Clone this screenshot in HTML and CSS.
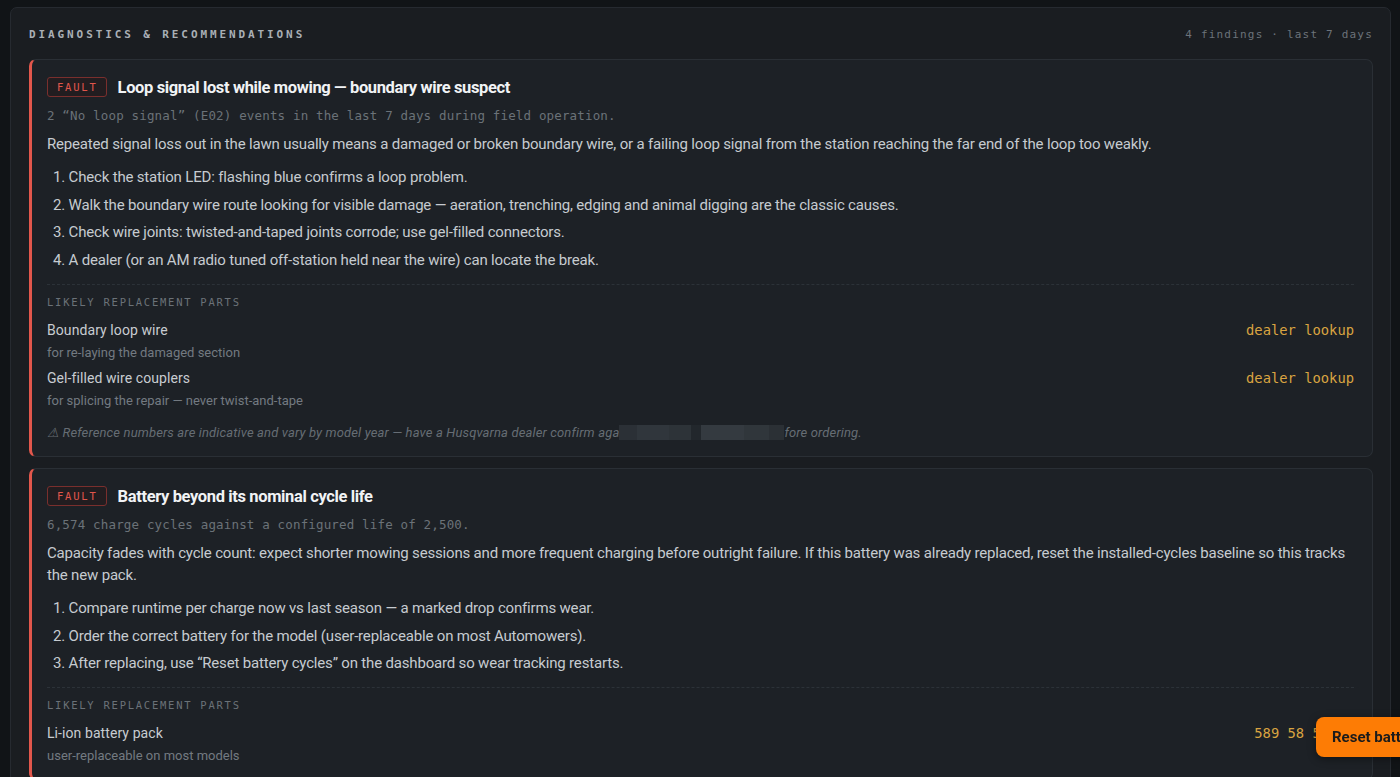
FILE: index.html
```html
<!DOCTYPE html>
<html lang="en">
<head>
<meta charset="utf-8">
<title>Diagnostics &amp; Recommendations</title>
<link rel="stylesheet" href="styles.css">
</head>
<body>
<section class="panel">
  <header class="panel-head">
    <h2 class="panel-title">DIAGNOSTICS &amp; RECOMMENDATIONS</h2>
    <span class="panel-meta">4 findings · last 7 days</span>
  </header>

  <article class="card">
    <div class="card-head">
      <span class="badge">FAULT</span>
      <h3 class="card-title">Loop signal lost while mowing — boundary wire suspect</h3>
    </div>
    <p class="evidence">2 “No loop signal” (E02) events in the last 7 days during field operation.</p>
    <p class="explain">Repeated signal loss out in the lawn usually means a damaged or broken boundary wire, or a failing loop signal from the station reaching the far end of the loop too weakly.</p>
    <ol class="steps">
      <li>Check the station LED: flashing blue confirms a loop problem.</li>
      <li>Walk the boundary wire route looking for visible damage — aeration, trenching, edging and animal digging are the classic causes.</li>
      <li>Check wire joints: twisted-and-taped joints corrode; use gel-filled connectors.</li>
      <li>A dealer (or an AM radio tuned off-station held near the wire) can locate the break.</li>
    </ol>
    <div class="parts">
      <div class="parts-label">LIKELY REPLACEMENT PARTS</div>
      <div class="part">
        <div class="part-info">
          <div class="part-name">Boundary loop wire</div>
          <div class="part-note">for re-laying the damaged section</div>
        </div>
        <div class="part-ref">dealer lookup</div>
      </div>
      <div class="part">
        <div class="part-info">
          <div class="part-name">Gel-filled wire couplers</div>
          <div class="part-note">for splicing the repair — never twist-and-tape</div>
        </div>
        <div class="part-ref">dealer lookup</div>
      </div>
      <p class="disclaimer">⚠ Reference numbers are indicative and vary by model year — have a Husqvarna dealer confirm aga<span class="redact">inst the part number be</span>fore ordering.</p>
    </div>
  </article>

  <article class="card">
    <div class="card-head">
      <span class="badge">FAULT</span>
      <h3 class="card-title">Battery beyond its nominal cycle life</h3>
    </div>
    <p class="evidence">6,574 charge cycles against a configured life of 2,500.</p>
    <p class="explain">Capacity fades with cycle count: expect shorter mowing sessions and more frequent charging before outright failure. If this battery was already replaced, reset the installed-cycles baseline so this tracks the new pack.</p>
    <ol class="steps">
      <li>Compare runtime per charge now vs last season — a marked drop confirms wear.</li>
      <li>Order the correct battery for the model (user-replaceable on most Automowers).</li>
      <li>After replacing, use “Reset battery cycles” on the dashboard so wear tracking restarts.</li>
    </ol>
    <div class="parts">
      <div class="parts-label">LIKELY REPLACEMENT PARTS</div>
      <div class="part">
        <div class="part-info">
          <div class="part-name">Li-ion battery pack</div>
          <div class="part-note">user-replaceable on most models</div>
        </div>
        <div class="part-ref">589 58 52-01</div>
      </div>
    </div>
  </article>
</section>

<button class="reset-btn" type="button">Reset battery cycles</button>
</body>
</html>
```

FILE: styles.css
```css
html, body {
  margin: 0;
  padding: 0;
  background: #111417;
  height: 100%;
  overflow: hidden;
}

body {
  font-family: Roboto, "Noto Sans", sans-serif;
  color: #c6cbd0;
}

.panel {
  margin: 7px 9px 0 10px;
  padding: 18px 17px 20px 18px;
  background: #1a1d21;
  border: 1px solid #262a30;
  border-radius: 7px;
}

.panel-head {
  display: flex;
  justify-content: space-between;
  align-items: center;
  height: 16px;
  margin-bottom: 17px;
}

.panel-title {
  margin: 0;
  font-family: "DejaVu Sans Mono", monospace;
  font-size: 11px;
  font-weight: bold;
  letter-spacing: 2.9px;
  color: #a9afb5;
}

.panel-meta {
  font-family: "DejaVu Sans Mono", monospace;
  font-size: 11px;
  letter-spacing: 1.2px;
  color: #6c737a;
}

.card {
  background: #1d2126;
  border: 1px solid #2a2f35;
  border-left: 3px solid #e2574c;
  border-radius: 7px;
  padding: 17px 18px 14px 15px;
  margin-bottom: 11px;
}

.card-head {
  display: flex;
  align-items: center;
  gap: 11px;
  height: 20px;
}

.badge {
  box-sizing: border-box;
  height: 20px;
  line-height: 18px;
  padding: 0 8px 0 9px;
  border: 1px solid #7a2f2d;
  border-radius: 3px;
  background: #221d20;
  color: #e0564c;
  font-family: "DejaVu Sans Mono", monospace;
  font-size: 10.5px;
  letter-spacing: 1.8px;
}

.card-title {
  margin: 0;
  font-family: Roboto, sans-serif;
  font-size: 16.5px;
  font-weight: bold;
  letter-spacing: -0.37px;
  color: #f1f3f5;
}

.evidence {
  margin: 10px 0 0;
  font-family: "DejaVu Sans Mono", monospace;
  font-size: 12.5px;
  line-height: 18px;
  letter-spacing: 0.16px;
  color: #6b7278;
}

.explain {
  margin: 8px 0 0;
  font-size: 15px;
  line-height: 22px;
  letter-spacing: -0.18px;
  color: #c6cbd0;
}

.steps {
  margin: 11px 0 0;
  padding: 0 0 0 6px;
  list-style-position: inside;
  font-size: 15px;
  line-height: 22px;
  letter-spacing: -0.18px;
  color: #c6cbd0;
}

.steps li + li {
  margin-top: 5.7px;
}

.parts {
  margin-top: 13px;
  border-top: 1px dashed #2c3238;
  padding-top: 10px;
}

.parts-label {
  font-family: "DejaVu Sans Mono", monospace;
  font-size: 10.5px;
  line-height: 14px;
  letter-spacing: 1.75px;
  color: #6b7278;
}

.part {
  display: flex;
  justify-content: space-between;
  align-items: flex-start;
  margin-top: 11px;
}

.part + .part {
  margin-top: 6px;
}

.part-name {
  font-size: 14px;
  line-height: 20px;
  letter-spacing: 0.08px;
  color: #c8ccd1;
}

.part-note {
  margin-top: 4px;
  font-size: 13px;
  line-height: 18px;
  color: #737a81;
}

.part-ref {
  font-family: "DejaVu Sans Mono", monospace;
  font-size: 13.8px;
  line-height: 20px;
  color: #d9a441;
}

.disclaimer {
  margin: 14px 0 0;
  font-size: 13px;
  line-height: 18px;
  font-style: italic;
  letter-spacing: 0.14px;
  color: #666d74;
}

.redact {
  display: inline-block;
  width: 165px;
  height: 15px;
  vertical-align: -3px;
  color: transparent;
  overflow: hidden;
  white-space: nowrap;
  background: linear-gradient(90deg,
    #2b3036 0, #2b3036 18px,
    #30363c 18px, #30363c 50px,
    #2d3338 50px, #2d3338 72px,
    #22272c 72px, #22272c 82px,
    #343a40 82px, #343a40 125px,
    #30363b 125px, #30363b 150px,
    #2b3035 150px, #2b3035 165px);
}

.reset-btn {
  position: fixed;
  left: 1316px;
  bottom: 20px;
  height: 40px;
  padding: 0 16px;
  border: none;
  border-radius: 8px;
  background: #fd7c05;
  color: #1b1b1b;
  font-family: Roboto, sans-serif;
  font-size: 15px;
  font-weight: bold;
  white-space: nowrap;
  box-shadow: 0 2px 8px rgba(0, 0, 0, 0.4);
}
```
